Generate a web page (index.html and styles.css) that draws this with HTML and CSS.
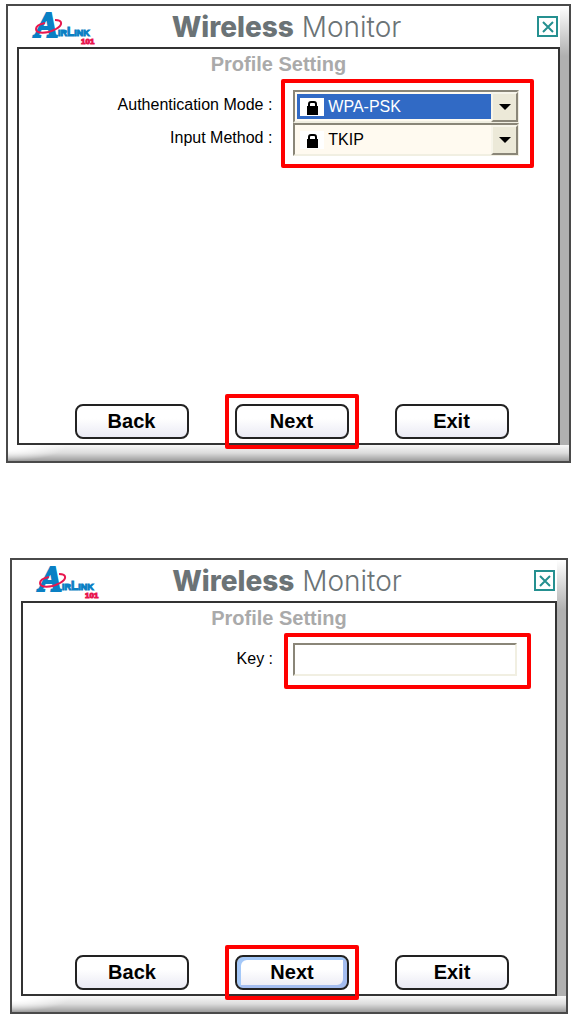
FILE: index.html
```html
<!DOCTYPE html>
<html lang="en">
<head>
    <meta charset="UTF-8">
    <meta name="viewport" content="width=device-width, initial-scale=1.0">
    <title>Wireless Monitor</title>
    <link rel="stylesheet" href="styles.css">
</head>
<body>

<section class="window">
    <header>
        <svg class="logo" width="68" height="41" viewBox="0 0 68 41" role="img" aria-label="AirLink 101">
            <text class="logo-a" x="4" y="31">A</text>
            <text class="logo-name" x="27" y="30">IR<tspan class="logo-l">L</tspan>INK</text>
            <text class="logo-num" x="50" y="38">101</text>
            <path class="logo-ring" d="M24 14C32 14 32 19 25 23C16 28 5 28 5 23C5 20 9 18 14 17"/>
        </svg>
        <h1><b>Wireless</b> Monitor</h1>
        <button class="close" aria-label="Close">
            <svg width="14" height="14" viewBox="0 0 14 14"><path d="M2 2L12 12M12 2L2 12"/></svg>
        </button>
    </header>
    <div class="panel">
        <h2>Profile Setting</h2>
        <form class="fields">
            <div class="labels">
                <label for="authMode">Authentication Mode :</label>
                <label for="inputMethod">Input Method :</label>
            </div>
            <div class="controls">
                <div class="combo selected">
                    <select id="authMode">
                        <option>WPA-PSK</option>
                    </select>
                    <svg class="lock" width="24" height="18" viewBox="0 0 24 18"><path class="shackle" d="M9 10V6Q9 4 11 4H14Q16 4 16 6V10"/><path d="M7 8H18V17H7Z"/></svg>
                    <span class="arrow"></span>
                </div>
                <div class="combo">
                    <select id="inputMethod">
                        <option>TKIP</option>
                    </select>
                    <svg class="lock" width="24" height="18" viewBox="0 0 24 18"><path class="shackle" d="M9 10V6Q9 4 11 4H14Q16 4 16 6V10"/><path d="M7 8H18V17H7Z"/></svg>
                    <span class="arrow"></span>
                </div>
            </div>
        </form>
        <div class="button-row">
            <button>Back</button>
            <div class="marked"><button>Next</button></div>
            <button>Exit</button>
        </div>
    </div>
</section>

<section class="window key-window">
    <header>
        <svg class="logo" width="68" height="41" viewBox="0 0 68 41" role="img" aria-label="AirLink 101">
            <text class="logo-a" x="4" y="31">A</text>
            <text class="logo-name" x="27" y="30">IR<tspan class="logo-l">L</tspan>INK</text>
            <text class="logo-num" x="50" y="38">101</text>
            <path class="logo-ring" d="M24 14C32 14 32 19 25 23C16 28 5 28 5 23C5 20 9 18 14 17"/>
        </svg>
        <h1><b>Wireless</b> Monitor</h1>
        <button class="close" aria-label="Close">
            <svg width="14" height="14" viewBox="0 0 14 14"><path d="M2 2L12 12M12 2L2 12"/></svg>
        </button>
    </header>
    <div class="panel">
        <h2>Profile Setting</h2>
        <form class="fields">
            <div class="labels">
                <label for="key">Key :</label>
            </div>
            <div class="controls">
                <input type="text" id="key">
            </div>
        </form>
        <div class="button-row">
            <button>Back</button>
            <div class="marked"><button class="active">Next</button></div>
            <button>Exit</button>
        </div>
    </div>
</section>

</body>
</html>
```
FILE: styles.css
```css
* {
    box-sizing: border-box;
}
body {
    margin: 0;
    padding: 4px 9px 5px 6px;
    background-color: #ffffff;
    color: #000;
    font-family: 'Liberation Sans', Arial, sans-serif;
    font-size: 16px;
}
.window {
    border: 2px solid #4a4a4a;
    padding: 0 9px 16px;
    /* bevel: faded left end of the bottom bar, the bar itself, then the right bar */
    background:
        radial-gradient(ellipse at top left, #ffffff 20%, rgba(255, 255, 255, 0) 70%) left bottom / 60px 16px no-repeat,
        linear-gradient(#f8f8f8, #dcdcdc 50%, #9c9c9c) left bottom / 100% 16px no-repeat,
        linear-gradient(#ffffff, #b0b0b0 50px) right top / 9px 100% no-repeat,
        #ffffff;
}
.key-window {
    margin: 95px 3px 0 4px;
}
header {
    display: grid;
    grid-template-columns: 1fr auto 1fr;
    align-items: center;
    height: 41px;
    background-color: #ffffff;
}
.logo {
    margin-left: 14px;
}
.logo text {
    font-weight: bold;
    fill: #0a80c4;
}
.logo .logo-a {
    font-family: 'Liberation Serif', serif;
    font-size: 35px;
    font-style: italic;
    stroke: #0a80c4;
    stroke-width: 2;
}
.logo .logo-name {
    font-size: 9px;
    stroke: #0a80c4;
}
.logo .logo-l {
    font-size: 12px;
}
.logo .logo-num {
    font-size: 8px;
    fill: #e8174f;
    stroke: #e8174f;
}
.logo-ring {
    fill: none;
    stroke: #e8174f;
    stroke-width: 2;
}
h1 {
    margin: 0;
    padding-right: 4px;
    color: #6b7376;
    font-family: Inter, sans-serif;
    font-size: 28px;
    font-weight: 300;
    line-height: 32px;
}
h1 b {
    font-weight: 800;
}
.close {
    justify-self: end;
    display: grid;
    place-items: center;
    width: 21px;
    height: 21px;
    margin-right: 2px;
    padding: 0;
    border: 2px solid #259090;
    background-color: #ffffff;
}
.close path {
    stroke: #259090;
    stroke-width: 2;
}
.panel {
    display: flex;
    flex-direction: column;
    min-height: 398px;
    border: 2px solid #333;
    padding-bottom: 4px;
    background-color: #ffffff;
}
.key-window .panel {
    min-height: 395px;
}
h2 {
    margin: 0;
    padding-right: 20px;
    color: #aaaaaa;
    font-size: 20px;
    line-height: 30px;
    text-align: center;
}
.fields {
    display: flex;
    gap: 9px;
}
.key-window .fields {
    gap: 11px;
}
.labels {
    flex: 0 0 47%;
    padding-top: 9px;
    text-align: right;
}
.labels label {
    display: block;
    line-height: 33px;
}
.controls {
    width: 253px;
    border: 4px solid #ff0000;
    border-radius: 2px;
    padding: 7px 11px 8px 8px;
}
.key-window .controls {
    width: 247px;
    padding: 6px 10px 9px 5px;
}
.combo {
    position: relative;
}
select, input {
    display: block;
    width: 100%;
    height: 33px;
    border: 2px solid;
    border-color: #8a8678 #f1efe2 #f1efe2 #8a8678;
    border-radius: 0;
    font: inherit;
    outline: none;
}
select {
    appearance: none;
    padding: 0 30px 0 33px;
    background-color: #fffaf0;
    color: #000;
}
.selected select {
    background-color: #316ac5;
    box-shadow: inset 0 0 0 2px #fffaf0;
    color: #ffffff;
}
.lock {
    position: absolute;
    top: 8px;
    left: 7px;
    background-color: #ffffff;
}
.lock .shackle {
    fill: none;
    stroke: #000;
    stroke-width: 2;
}
.arrow {
    position: absolute;
    top: 2px;
    right: 1px;
    bottom: 1px;
    display: grid;
    place-items: center;
    width: 27px;
    border: 2px solid;
    border-color: #f7f5ea #8a8678 #8a8678 #f7f5ea;
    background-color: #ece9d8;
    pointer-events: none;
}
.arrow::before {
    content: "";
    border: 6px solid transparent;
    border-top-color: #000;
    border-bottom: 0;
}
.button-row {
    display: flex;
    justify-content: center;
    gap: 46px;
    margin-top: auto;
    padding-left: 6px;
}
.button-row button {
    display: block;
    width: 114px;
    height: 35px;
    border: 2px solid #222;
    border-radius: 8px;
    padding: 0;
    background: linear-gradient(#ffffff 40%, #eaeaf4);
    color: #000;
    font: bold 20px 'Liberation Sans', Arial, sans-serif;
}
.button-row .active {
    box-shadow: inset 4px 3px 0 #a4c8f8, inset -4px -3px 0 #a4bdf0;
}
.marked {
    position: relative;
}
/* red frame drawn over the panel edge */
.marked::after {
    content: "";
    position: absolute;
    inset: -10px;
    border: 4px solid #ff0000;
    border-radius: 2px;
    pointer-events: none;
}
```
